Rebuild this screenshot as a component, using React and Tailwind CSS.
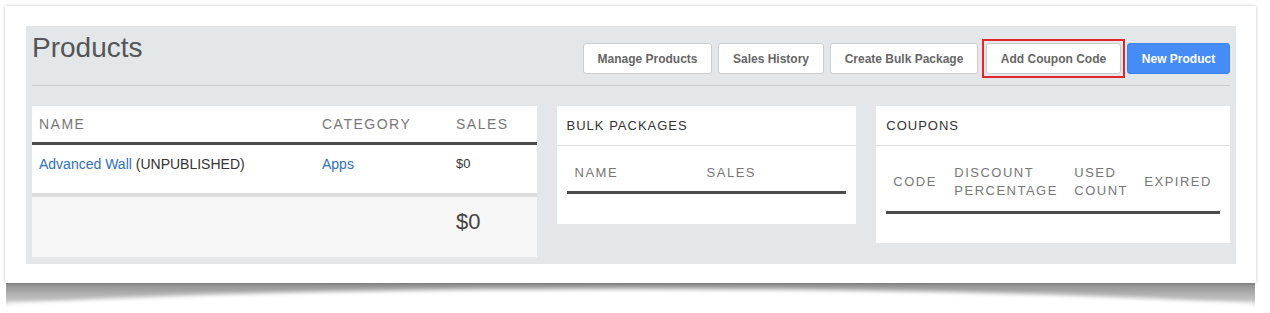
import React from 'react';

const headerCls = "text-[#777] tracking-[1.5px] uppercase";

export default function App() {
  return (
    <div className="w-[1270px] h-[313px] bg-white overflow-hidden font-['Liberation_Sans',Arial,sans-serif]">
      <div className="pt-[6px] pl-[5px]">
        <div className="relative w-[1251px]">
          {/* curled page shadow */}
          <div className="absolute left-[1px] right-[1px] top-full h-[24px] overflow-hidden">
            <div className="absolute inset-0 bg-gradient-to-b from-[#8c8c8c] via-[#b4b4b4] to-[#d6d6d6]" />
            <div className="absolute left-[-80px] right-[-80px] top-[6px] h-[60px] rounded-[50%] bg-white blur-[2px]" />
            <div className="absolute inset-x-0 bottom-0 h-[4px] bg-white blur-[2px]" />
          </div>

          <div className="relative bg-white shadow-[0_0_3px_rgba(0,0,0,0.25)] pt-[20px] pl-[21px] pr-[20px] pb-[19px]">
            <div className="bg-[#e4e7ea] px-[6px] h-[238px]">
              {/* Title row */}
              <div className="flex justify-between h-[60px] border-b border-[#c9ccd0]">
                <h1 className="text-[28px] leading-none text-[#555] pt-[8px]">Products</h1>
                <div className="flex items-center self-start mt-[13px] text-[12px] font-bold text-[#666]">
                  <button className="w-[129px] h-[31px] bg-white border border-[#ccc] rounded-[3px]">Manage Products</button>
                  <button className="w-[106px] h-[31px] ml-[6px] bg-white border border-[#ccc] rounded-[3px]">Sales History</button>
                  <button className="w-[148px] h-[31px] ml-[6px] bg-white border border-[#ccc] rounded-[3px]">Create Bulk Package</button>
                  <span className="ml-[4px] border-2 border-[#e3262b] p-[2px] flex">
                    <button className="w-[135px] h-[31px] bg-white border border-[#ccc] rounded-[3px]">Add Coupon Code</button>
                  </span>
                  <button className="w-[103px] h-[31px] ml-[2px] bg-[#468cf6] border border-[#3f84ee] rounded-[3px] text-white">New Product</button>
                </div>
              </div>

              {/* Panels */}
              <div className="flex items-start gap-[20px] mt-[20px]">
                {/* Products table */}
                <div className="w-[505px] bg-white">
                  <div className={`flex items-center h-[36px] text-[14px] ${headerCls}`}>
                    <div className="w-[283px] pl-[7px]">Name</div>
                    <div className="w-[134px] pl-[7px]">Category</div>
                    <div className="pl-[7px]">Sales</div>
                  </div>
                  <div className="h-[3px] bg-[#4b4b4b]" />
                  <div className="flex h-[48px] pt-[10px] leading-[18px] text-[14px]">
                    <div className="w-[283px] pl-[7px] text-[#333]">
                      <span className="text-[#2f6fc0]">Advanced Wall</span> (UNPUBLISHED)
                    </div>
                    <div className="w-[134px] pl-[7px] text-[#2f6fc0]">Apps</div>
                    <div className="pl-[7px] text-[13px] text-[#333]">$0</div>
                  </div>
                  <div className="h-[4px] bg-[#dcdcdc]" />
                  <div className="flex h-[60px] bg-[#f7f7f7] pt-[12px]">
                    <div className="w-[417px]" />
                    <div className="pl-[7px] text-[22px] leading-[26px] text-[#444]">$0</div>
                  </div>
                </div>

                {/* Bulk packages */}
                <div className="w-[300px] bg-white">
                  <div className="h-[40px] border-b border-[#ddd] flex items-center pl-[10px] text-[13px] tracking-[1px] text-[#333]">
                    BULK PACKAGES
                  </div>
                  <div className="px-[10px] pb-[30px]">
                    <div className={`flex pt-[19px] pb-[10px] leading-[16px] text-[13px] ${headerCls}`}>
                      <div className="w-[132px] pl-[8px]">Name</div>
                      <div className="pl-[8px]">Sales</div>
                    </div>
                    <div className="h-[3px] bg-[#4b4b4b]" />
                  </div>
                </div>

                {/* Coupons */}
                <div className="w-[354px] bg-white">
                  <div className="h-[40px] border-b border-[#ddd] flex items-center pl-[10px] text-[13px] tracking-[1px] text-[#333]">
                    COUPONS
                  </div>
                  <div className="px-[10px] pb-[29px]">
                    <div className={`flex items-center pt-[18px] pb-[11px] leading-[18px] text-[13px] ${headerCls}`}>
                      <div className="w-[61px] pl-[7px]">Code</div>
                      <div className="w-[120px] pl-[7px]">Discount<br />Percentage</div>
                      <div className="w-[70px] pl-[7px]">Used<br />Count</div>
                      <div className="pl-[7px]">Expired</div>
                    </div>
                    <div className="h-[3px] bg-[#4b4b4b]" />
                  </div>
                </div>
              </div>
            </div>
          </div>
        </div>
      </div>
    </div>
  );
}
